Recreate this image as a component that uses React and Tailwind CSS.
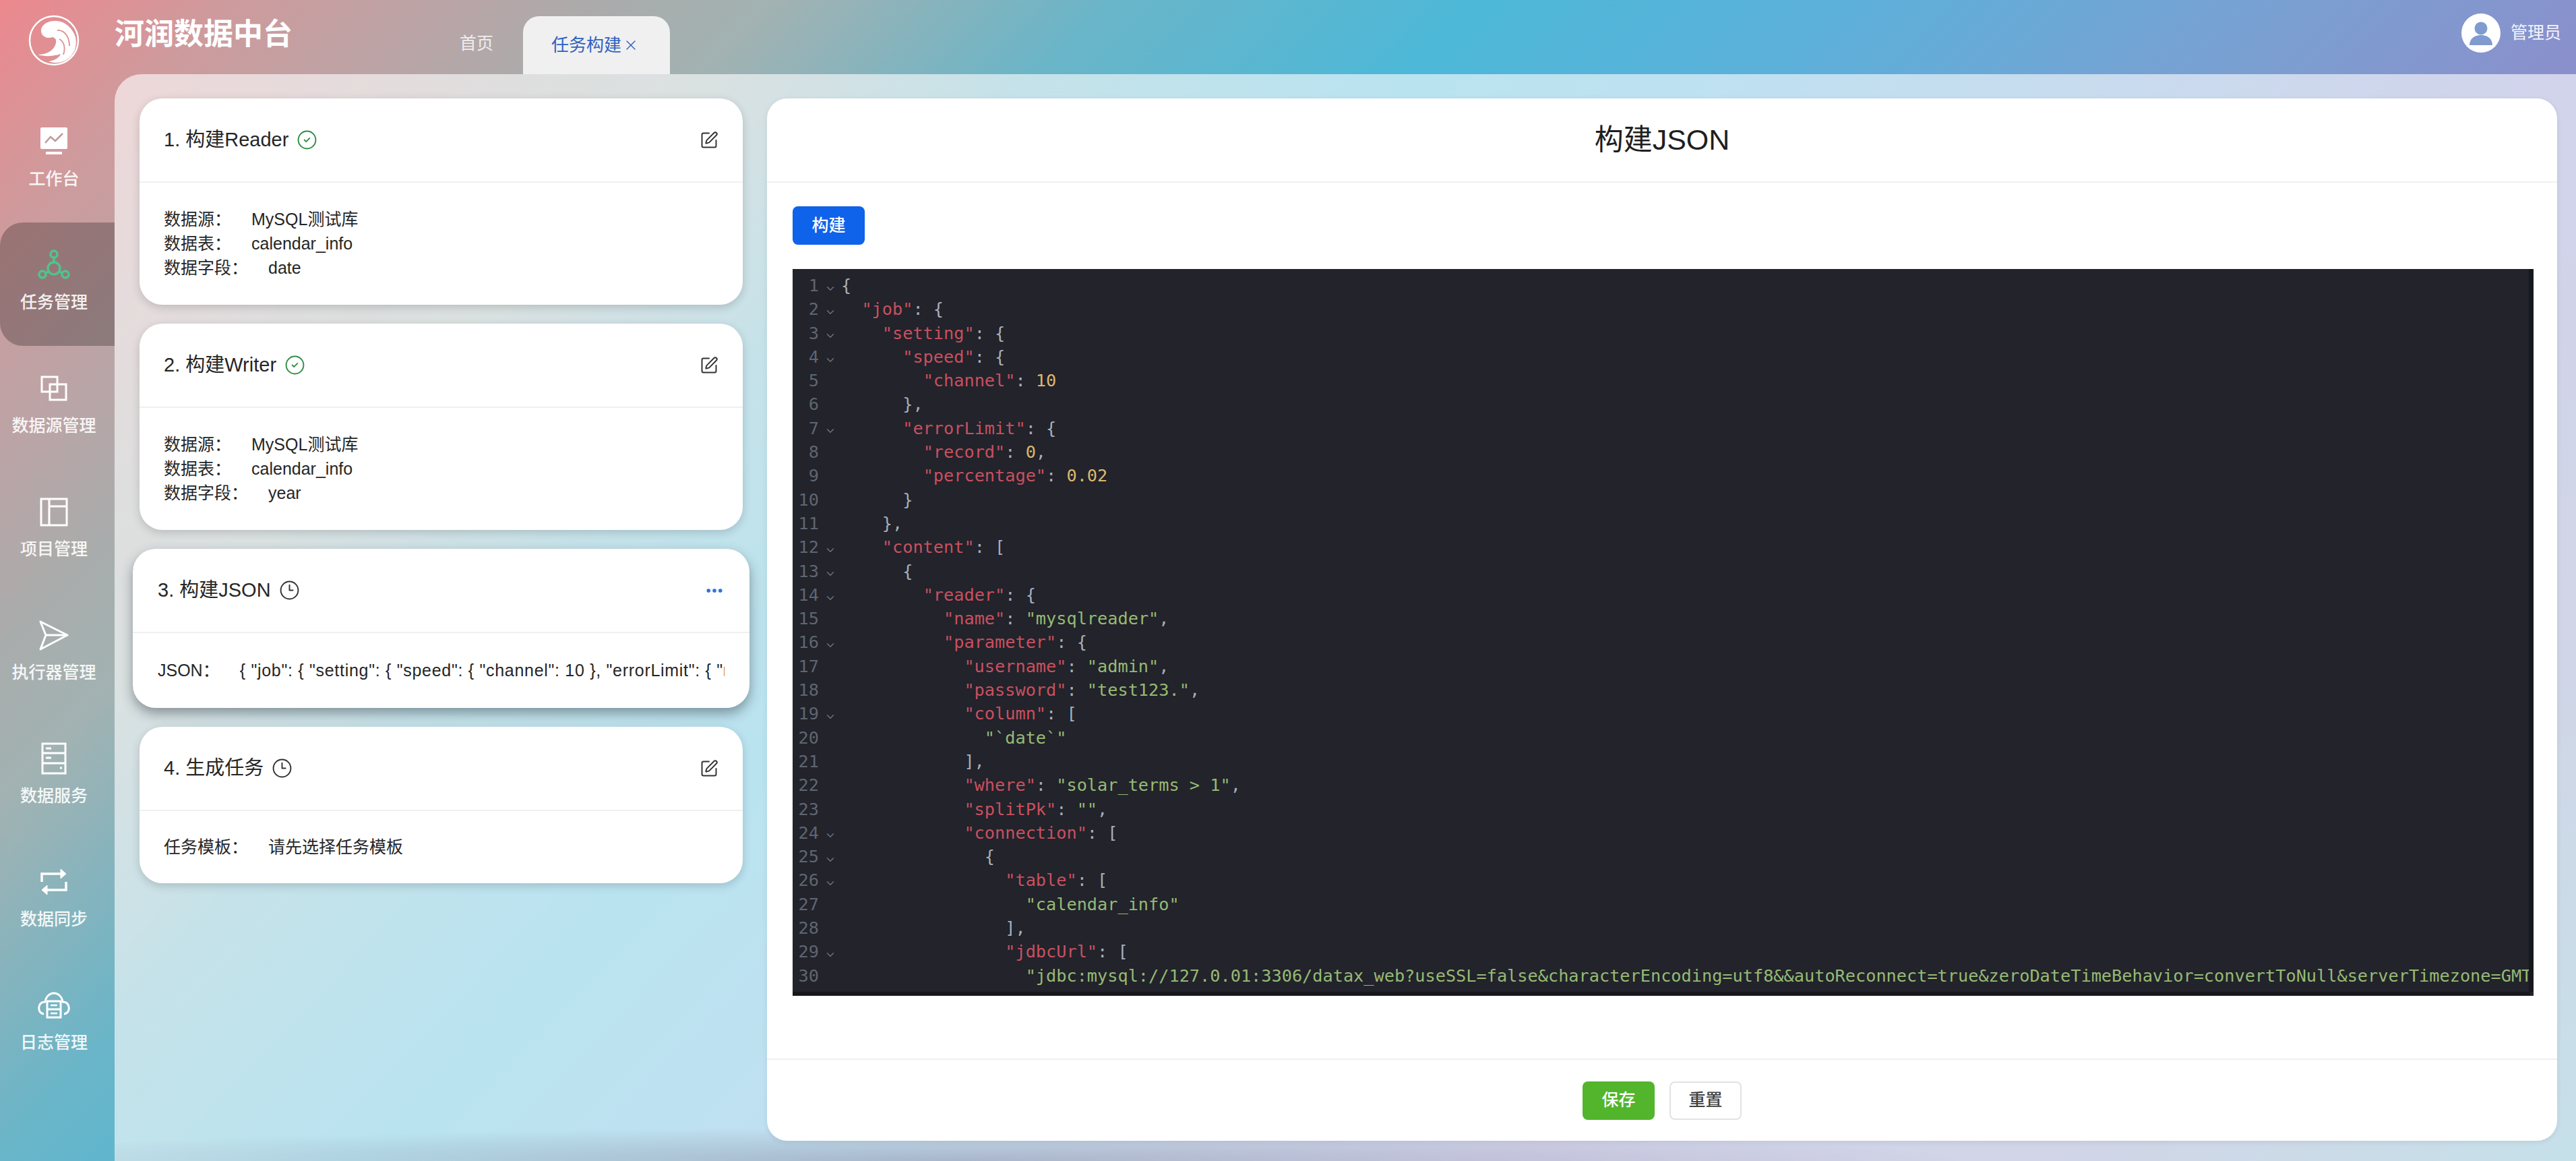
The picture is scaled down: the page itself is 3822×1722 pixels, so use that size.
import React from 'react';
import { CircleCheck, Clock3, SquarePen, Ellipsis, ChevronDown, X } from 'lucide-react';

const jsonLines = [
  '{',
  '  "job": {',
  '    "setting": {',
  '      "speed": {',
  '        "channel": 10',
  '      },',
  '      "errorLimit": {',
  '        "record": 0,',
  '        "percentage": 0.02',
  '      }',
  '    },',
  '    "content": [',
  '      {',
  '        "reader": {',
  '          "name": "mysqlreader",',
  '          "parameter": {',
  '            "username": "admin",',
  '            "password": "test123.",',
  '            "column": [',
  '              "`date`"',
  '            ],',
  '            "where": "solar_terms > 1",',
  '            "splitPk": "",',
  '            "connection": [',
  '              {',
  '                "table": [',
  '                  "calendar_info"',
  '                ],',
  '                "jdbcUrl": [',
  '                  "jdbc:mysql://127.0.01:3306/datax_web?useSSL=false&characterEncoding=utf8&&autoReconnect=true&zeroDateTimeBehavior=convertToNull&serverTimezone=GMT"',
  '                ],',
];

const Logo = () => (
  <svg width="76" height="76" viewBox="0 0 76 76" fill="none">
    <circle cx="38" cy="38" r="36" stroke="white" strokeWidth="2.5" />
    <path
      d="M19 22C20 14 30 8 42 9C55 10 66 20 70 33C73 47 68 60 56 67C48 72 38 72 30 69C38 68 46 64 48 58C36 62 24 62 14 59C26 59 38 54 41 42C42 37 40 34 36 33C30 36 18 33 19 22Z"
      fill="white"
    />
    <path d="M43 23C53 22 61 32 61 46M46 36C54 40 55 50 52 59" stroke="#dc9092" strokeWidth="1.8" />
  </svg>
);

const WorkIcon = () => (
  <svg width="42" height="42" viewBox="0 0 42 42" fill="none">
    <rect x="1" y="0" width="40" height="32" rx="2" fill="white" />
    <path d="M8 23L16 14L23 20L34 9" stroke="#c09a9c" strokeWidth="2.5" />
    <rect x="9" y="36" width="24" height="4" fill="white" />
  </svg>
);

const TaskIcon = () => (
  <svg width="48" height="46" viewBox="0 0 48 46" fill="none" stroke="#4fc48c" strokeWidth="3.5">
    <circle cx="24" cy="7" r="5" />
    <circle cx="7" cy="37" r="5" />
    <circle cx="41" cy="37" r="5" />
    <circle cx="24" cy="28" r="9" />
    <path d="M24 12V19M16 33L11 35M32 33L37 35" />
  </svg>
);

const SourceIcon = () => (
  <svg width="40" height="38" viewBox="0 0 40 38" fill="none" stroke="white" strokeWidth="3">
    <rect x="2" y="2" width="23" height="22" />
    <rect x="14" y="13" width="24" height="23" />
  </svg>
);

const ProjectIcon = () => (
  <svg width="42" height="43" viewBox="0 0 42 43" fill="none" stroke="white" strokeWidth="3">
    <rect x="2" y="2" width="38" height="39" />
    <path d="M14 2V41M14 13H40" />
  </svg>
);

const SendIcon = () => (
  <svg width="46" height="46" viewBox="0 0 46 46" fill="none" stroke="white" strokeWidth="3" strokeLinejoin="round">
    <path d="M3 3L43 23L3 44L11 23Z" />
    <path d="M11 23H43" />
  </svg>
);

const ServiceIcon = () => (
  <svg width="38" height="48" viewBox="0 0 38 48" fill="none" stroke="white" strokeWidth="3">
    <rect x="2" y="2" width="34" height="44" />
    <path d="M2 16H36M2 31H36" />
    <path d="M7 9H15M7 23H15M28 38H31" />
  </svg>
);

const SyncIcon = () => (
  <svg width="42" height="42" viewBox="0 0 42 42" fill="none" stroke="white" strokeWidth="3.5">
    <path d="M3 21V9H34" />
    <path d="M39 21V33H8" />
    <path d="M31 2L39 9L31 16Z" fill="white" strokeWidth="1" />
    <path d="M11 26L3 33L11 40Z" fill="white" strokeWidth="1" />
  </svg>
);

const LogIcon = () => (
  <svg width="48" height="40" viewBox="0 0 48 40" fill="none" stroke="white" strokeWidth="3">
    <path d="M9 33C3 32 1 27 2 22C3 17 7 15 11 15C12 7 18 2 24 2C30 2 36 7 37 15C41 15 45 17 46 22C47 27 45 32 39 33" />
    <rect x="14" y="14" width="20" height="24" />
    <path d="M14 26H34" />
    <path d="M19 20H29M19 32H29" strokeWidth="2.5" />
  </svg>
);

const navItems = [
  { label: '工作台', icon: <WorkIcon /> },
  { label: '任务管理', icon: <TaskIcon />, active: true },
  { label: '数据源管理', icon: <SourceIcon /> },
  { label: '项目管理', icon: <ProjectIcon /> },
  { label: '执行器管理', icon: <SendIcon /> },
  { label: '数据服务', icon: <ServiceIcon /> },
  { label: '数据同步', icon: <SyncIcon /> },
  { label: '日志管理', icon: <LogIcon /> },
];

const JsonValue = ({ text }) => {
  const parts = text.split(/("(?:[^"]*)"|-?\d+(?:\.\d+)?)/);
  return parts.map((part, i) => {
    if (part.startsWith('"')) return <span key={i} className="text-[#96ba74]">{part}</span>;
    if (/^-?\d/.test(part)) return <span key={i} className="text-[#dcb86c]">{part}</span>;
    return <span key={i}>{part}</span>;
  });
};

const CodeLine = ({ line, num }) => {
  const match = line.match(/^(\s*)("[^"]*")(:)(.*)$/);
  const foldable = /[{[]$/.test(line);
  return (
    <div className="flex h-[35.3px] leading-[35.3px]">
      <div className="w-[39px] text-right text-[#5f6670] shrink-0">{num}</div>
      <div className="w-[33px] shrink-0 flex items-center justify-center pt-[8px]">
        {foldable && <ChevronDown size={18} strokeWidth={2} className="text-[#6b7280]" />}
      </div>
      <div className="whitespace-pre text-[#a8afba]">
        {match ? (
          <>
            {match[1]}
            <span className="text-[#c9505f]">{match[2]}</span>
            {match[3]}
            <JsonValue text={match[4]} />
          </>
        ) : (
          <JsonValue text={line} />
        )}
      </div>
    </div>
  );
};

const Info = ({ label, value, clip }) => (
  <div className="flex text-[25px] leading-[36px] text-[#262626] whitespace-nowrap">
    <span className="mr-[30px] shrink-0">{label}：</span>
    <span className={clip ? 'flex-1 overflow-hidden tracking-[0.7px]' : ''}>{value}</span>
  </div>
);

const StepCard = ({ title, icon, rows, active, bodyClass }) => (
  <div
    className={`bg-white rounded-[34px] ${
      active ? '-mx-[10px] shadow-[0_8px_18px_rgba(40,50,60,0.45)]' : 'shadow-[0_4px_14px_rgba(0,0,0,0.16)]'
    }`}
  >
    <div className={`h-[125px] flex items-center justify-between border-b-2 border-[#f0f0f0] ${active ? 'px-[37px]' : 'px-[36px]'}`}>
      <div className="flex items-center gap-[12px] text-[29px] text-[#262626]">
        {title}
        {icon === 'done' ? (
          <CircleCheck size={31} strokeWidth={1.5} className="text-[#2f8f46]" />
        ) : (
          <Clock3 size={31} strokeWidth={1.5} className="text-[#333333]" />
        )}
      </div>
      {active ? (
        <Ellipsis size={30} strokeWidth={2.5} className="text-[#2f6fdc]" />
      ) : (
        <SquarePen size={28} strokeWidth={1.7} className="text-[#333333] -ml-[2px]" />
      )}
    </div>
    <div className={`${active ? 'px-[37px]' : 'px-[36px]'} ${bodyClass}`}>
      {rows.map((row) => (
        <Info key={row[0]} label={row[0]} value={row[1]} clip={active} />
      ))}
    </div>
  </div>
);

export default function App() {
  return (
    <div className="w-full h-[1722px] overflow-hidden flex flex-col font-['Liberation_Sans','Noto_Sans_CJK_SC',sans-serif] bg-[linear-gradient(134deg,#ec888e_0%,#cf9a9c_6%,#bba4a6_12%,#a9acac_17%,#a2b2b2_21%,#6ab5c8_30%,#4db8d8_40%,#5cb0da_50%,#7aa0d2_62%,#8a90cc_71%,#8a92c0_85%,#6cb0c8_100%)]">
      <header className="h-[110px] shrink-0 flex items-center">
        <div className="w-[170px] pl-[42px] pt-[10px] shrink-0">
          <Logo />
        </div>
        <div className="text-[44px] font-semibold text-white w-[512px] shrink-0 -mt-[8px] whitespace-nowrap">河润数据中台</div>
        <div className="text-[25px] text-white/80 w-[94px] shrink-0 pt-[20px]">首页</div>
        <div className="self-end h-[86px] w-[218px] rounded-t-[24px] bg-[#f0f0f0] text-[26px] text-[#2f62c0] flex items-center justify-center gap-[2px] pr-[4px] whitespace-nowrap">
          任务构建
          <X size={24} strokeWidth={1.4} />
        </div>
        <div className="ml-auto pr-[22px] -mt-[12px] flex items-center gap-[15px] text-[25px] text-white/90">
          <div className="w-[58px] h-[58px] rounded-full bg-white flex items-center justify-center overflow-hidden">
            <svg width="58" height="58" viewBox="0 0 58 58" fill="#7f9bd0">
              <circle cx="29" cy="22" r="9.5" />
              <path d="M12 47C12 37 20 32 29 32C38 32 46 37 46 47Z" />
            </svg>
          </div>
          管理员
        </div>
      </header>

      <div className="flex-1 flex min-h-0">
        <nav className="w-[170px] shrink-0 pt-[37px]">
          {navItems.map((item) => (
            <div
              key={item.label}
              className={`h-[183px] pt-[39px] pr-[10px] flex flex-col items-center text-[25px] font-medium text-white/90 ${
                item.active ? 'bg-black/25 rounded-tl-[34px] rounded-bl-[34px]' : ''
              }`}
            >
              <div className="h-[48px] flex items-center justify-center">{item.icon}</div>
              <div className="mt-[13px] leading-[36px] whitespace-nowrap">{item.label}</div>
            </div>
          ))}
        </nav>

        <main className="flex-1 min-w-0 rounded-tl-[40px] bg-[radial-gradient(ellipse_1500px_50px_at_1250px_100%,rgba(110,100,125,0.32),transparent),linear-gradient(rgba(255,255,255,0.61),rgba(255,255,255,0.61))] pt-[36px] pl-[37px] pr-[28px] pb-[30px] flex gap-[36px]">
          <div className="w-[895px] shrink-0 flex flex-col gap-[28px]">
            <StepCard
              title="1. 构建Reader"
              icon="done"
              bodyClass="pt-[36px] pb-[37px]"
              rows={[
                ['数据源', 'MySQL测试库'],
                ['数据表', 'calendar_info'],
                ['数据字段', 'date'],
              ]}
            />
            <StepCard
              title="2. 构建Writer"
              icon="done"
              bodyClass="pt-[36px] pb-[37px]"
              rows={[
                ['数据源', 'MySQL测试库'],
                ['数据表', 'calendar_info'],
                ['数据字段', 'year'],
              ]}
            />
            <StepCard
              title="3. 构建JSON"
              icon="wait"
              active
              bodyClass="pt-[37px] pb-[38px]"
              rows={[['JSON', '{ "job": { "setting": { "speed": { "channel": 10 }, "errorLimit": { "record": 0, "percentage": 0.02 } }, "content": [ { "reader": {']]}
            />
            <StepCard title="4. 生成任务" icon="wait" bodyClass="pt-[35px] pb-[36px]" rows={[['任务模板', '请先选择任务模板']]} />
          </div>

          <section className="flex-1 min-w-0 bg-white rounded-[30px] flex flex-col shadow-[0_2px_8px_rgba(0,0,0,0.08)]">
            <div className="h-[125px] shrink-0 flex items-center justify-center border-b-2 border-[#f0f0f0] text-[43px] text-[#1f1f1f]">
              构建JSON
            </div>
            <div className="flex-1 min-h-0 pt-[35px] pl-[38px] pr-[35px] border-b-2 border-[#f0f0f0]">
              <button className="block w-[107px] h-[57px] rounded-[8px] bg-[#0f62ea] text-white text-[25px] font-medium">构建</button>
              <div className="mt-[36px] bg-[#22232b] h-[1078px] flex flex-col font-['DejaVu_Sans_Mono',monospace] text-[25.25px]">
                <div className="flex-1 min-h-0 flex">
                  <div className="flex-1 min-w-0 overflow-hidden pt-[7px]">
                    {jsonLines.map((line, i) => (
                      <CodeLine key={i} line={line} num={i + 1} />
                    ))}
                  </div>
                  <div className="w-[7px] shrink-0 bg-[#17181b]" />
                </div>
                <div className="h-[6px] shrink-0 bg-[#17181b] mr-[5px]" />
              </div>
            </div>
            <div className="h-[120px] shrink-0 flex items-center justify-center gap-[22px] text-[25px]">
              <button className="w-[107px] h-[57px] rounded-[8px] bg-[#52b52c] text-white font-medium">保存</button>
              <button className="w-[107px] h-[57px] rounded-[8px] bg-white border-2 border-[#e2e2e2] text-[#404040] font-medium">重置</button>
            </div>
          </section>
        </main>
      </div>
    </div>
  );
}
